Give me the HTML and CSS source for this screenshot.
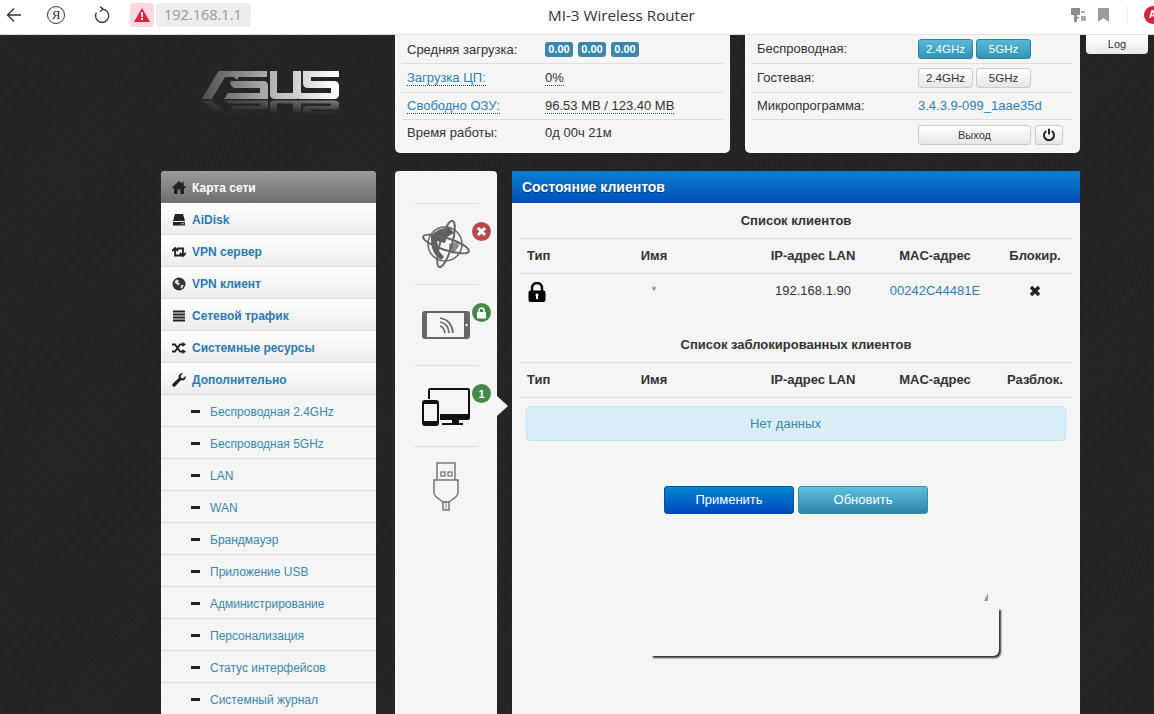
FILE: index.html
```html
<!DOCTYPE html>
<html lang="ru">
<head>
<meta charset="utf-8">
<title>MI-3 Wireless Router</title>
<link rel="stylesheet" href="styles.css">
</head>
<body>
<header class="bar">
  <div class="bar-left">
    <svg class="ico-back" width="16" height="16" viewBox="0 0 16 16"><path d="M15 8H1.500M8 1.500 1.500 8 8 14.500" fill="none" stroke="#333" stroke-width="1.300"/></svg>
    <span class="yandex">Я</span>
    <svg class="ico-reload" width="18" height="18" viewBox="0 0 18 18"><path d="M9.500 3.200A6.600 6.600 0 1 1 3.400 6.500" fill="none" stroke="#333" stroke-width="1.300"/><path d="M7 .5 10 3.200 7 5.600" fill="none" stroke="#333" stroke-width="1.300"/></svg>
    <span class="warn"><svg width="16" height="14" viewBox="0 0 16 14"><path d="M8 0 16 14H0Z" fill="#d9233f"/><path d="M7.100 4h1.800v5H7.100zM7.100 10h1.800v2H7.100z" fill="#fff"/></svg></span>
    <span class="addr">192.168.1.1</span>
  </div>
  <div class="bar-title">MI-3 Wireless Router</div>
  <div class="bar-right">
    <svg width="15" height="14" viewBox="0 0 15 14"><path d="M0 0h9v7H6v2h2v1.500H6V14H3V7H0Z" fill="#8d8d8d"/><path d="M10 3h4v2h-4zM10 8h5v5h-5z" fill="#a9a9a9"/></svg>
    <svg class="ico-mark" width="11" height="14" viewBox="0 0 11 14"><path d="M0 0h11v14L5.500 10 0 14Z" fill="#9c9c9c"/></svg>
    <span class="sep"></span>
    <span class="avatar">A</span>
  </div>
</header>

<div class="page">
  <div class="top">
    <div class="logo-col">
      <svg class="logo" width="140" height="46" viewBox="0 0 140 46">
        <defs>
          <linearGradient id="lg" x1="0" y1="0" x2="1" y2="0"><stop offset="0" stop-color="#4d4d4d"/><stop offset=".3" stop-color="#8c8c8c"/><stop offset=".6" stop-color="#c4c4c4"/><stop offset="1" stop-color="#fff"/></linearGradient>
          <linearGradient id="fade" x1="0" y1="30" x2="0" y2="44" gradientUnits="userSpaceOnUse"><stop offset="0" stop-color="#fff" stop-opacity=".42"/><stop offset="1" stop-color="#fff" stop-opacity="0"/></linearGradient>
          <mask id="fm" maskUnits="userSpaceOnUse" x="0" y="0" width="140" height="46"><rect x="0" y="30" width="140" height="16" fill="url(#fade)"/></mask>
          <path id="mark" d="M.7 29 17.300 1H66V7H37.500L36 10 33 7H24L10.700 29ZM30 11H62Q67 11 67 16V29H23L27 23H59V18H33Q28 15 30 11ZM69 1H76V23H92V1H100V24Q100 29 95 29H74Q69 29 69 24ZM102 1H138V7H110V11H133Q138 11 138 16V24Q138 29 133 29H98V23H130V18H107Q102 18 102 13Z"/>
        </defs>
        <use href="#mark" fill="url(#lg)"/>
        <g mask="url(#fm)"><use href="#mark" fill="url(#lg)" transform="translate(0 45) scale(1 -.5)"/></g>
      </svg>
    </div>
    <section class="panel">
      <div class="row row-a row-badges"><span class="lbl">Средняя загрузка:</span><span class="val"><b class="badge">0.00</b><b class="badge">0.00</b><b class="badge">0.00</b></span></div>
      <div class="row row-b"><span class="lbl"><a class="link dotted">Загрузка ЦП:</a></span><span class="val"><span class="dotted">0%</span></span></div>
      <div class="row row-c"><span class="lbl"><a class="link dotted">Свободно ОЗУ:</a></span><span class="val"><span class="dotted">96.53 MB / 123.40 MB</span></span></div>
      <div class="row row-last"><span class="lbl">Время работы:</span><span class="val">0д 00ч 21м</span></div>
    </section>
    <section class="panel panel-r">
      <div class="row row-a"><span class="lbl">Беспроводная:</span><span class="val2"><span class="mini on">2.4GHz</span><span class="mini on">5GHz</span></span></div>
      <div class="row row-b"><span class="lbl">Гостевая:</span><span class="val2"><span class="mini">2.4GHz</span><span class="mini">5GHz</span></span></div>
      <div class="row row-c"><span class="lbl">Микропрограмма:</span><span class="val2"><a class="link">3.4.3.9-099_1aae35d</a></span></div>
      <div class="row row-last row-exit"><span class="val2"><span class="exit">Выход</span><span class="power"><svg width="14" height="14" viewBox="0 0 14 14"><path d="M4.300 3A5 5 0 1 0 9.700 3M7 .8V6.500" fill="none" stroke="#222" stroke-width="2"/></svg></span></span></div>
    </section>
    <div class="log">Log</div>
  </div>

  <div class="main">
    <nav class="side">
      <a class="si si-active"><svg class="si-ic" width="14" height="13" viewBox="0 0 14 13"><path d="M7 0 0 6.500 1 7.500 2 6.700V13H5.500V8.500H8.500V13H12V6.700L13 7.500 14 6.500 11.500 4.200V1H9.800V2.600Z" fill="#222"/></svg>Карта сети</a>
      <a class="si"><svg class="si-ic" width="14" height="13" viewBox="0 0 14 13"><path d="M3 1H11L13 8H1ZM1 9H13V12.500H1Z" fill="#222"/><path d="M9 10.300h1.200v1H9zM11 10.300h1.200v1H11z" fill="#fff"/></svg>AiDisk</a>
      <a class="si"><svg class="si-ic" width="14" height="12" viewBox="0 0 14 12"><path d="M3 3.500V9.500H10M11 8.500V2.500H5M0 5 3 2 6 5M8 7 11 10 14 7" fill="none" stroke="#222" stroke-width="1.800"/></svg>VPN сервер</a>
      <a class="si"><svg class="si-ic" width="14" height="14" viewBox="0 0 14 14"><circle cx="7" cy="7" r="6.500" fill="#333"/><path d="M4 2.500 7 3.500 6 5.500 8 6.500 6.500 8.500 4.500 7 2.500 5.500ZM9 8 12 8 10 11.500 8.500 11Z" fill="#ddd"/></svg>VPN клиент</a>
      <a class="si"><svg class="si-ic" width="14" height="12" viewBox="0 0 14 12"><path d="M1 .5h12v2H1zM1 3.500h12v2H1zM1 6.500h12v2H1zM1 9.500h12v2H1z" fill="#222"/></svg>Сетевой трафик</a>
      <a class="si"><svg class="si-ic" width="14" height="12" viewBox="0 0 14 12"><path d="M0 2.500H3L8 9.500H11M0 9.500H3L8 2.500H11" fill="none" stroke="#222" stroke-width="1.800"/><path d="M10.500 0 14 2.500 10.500 5ZM10.500 7 14 9.500 10.500 12Z" fill="#222"/></svg>Системные ресурсы</a>
      <a class="si"><svg class="si-ic" width="14" height="14" viewBox="0 0 14 14"><path d="M13.500 3 11 5.300 9 4.800 8.600 2.800 11 .5C8.800-.2 6.500 1.200 6.500 3.600L6.700 5 .8 10.800C0 11.600 0 12.500.7 13.200S2.400 14 3.200 13.200L9 7.300 10.400 7.500C12.800 7.500 14.200 5.200 13.500 3Z" fill="#222"/></svg>Дополнительно</a>
      <a class="sub"><i class="dash"></i>Беспроводная 2.4GHz</a>
      <a class="sub"><i class="dash"></i>Беспроводная 5GHz</a>
      <a class="sub"><i class="dash"></i>LAN</a>
      <a class="sub"><i class="dash"></i>WAN</a>
      <a class="sub"><i class="dash"></i>Брандмауэр</a>
      <a class="sub"><i class="dash"></i>Приложение USB</a>
      <a class="sub"><i class="dash"></i>Администрирование</a>
      <a class="sub"><i class="dash"></i>Персонализация</a>
      <a class="sub"><i class="dash"></i>Статус интерфейсов</a>
      <a class="sub"><i class="dash"></i>Системный журнал</a>
    </nav>

    <aside class="net">
      <div class="cell">
        <svg width="52" height="50" viewBox="0 0 52 50">
          <circle cx="25" cy="25" r="17" fill="#f4f4f4" stroke="#666" stroke-width="1.500"/>
          <path d="M11 17Q18 8 30 9L34 14 27 18 25 24 17 22 19 32 24 38 21 41Q10 34 11 17Z" fill="#5f5f5f"/>
          <path d="M29 25 37 23 39 27 33 35 29 32Z" fill="#8a8a8a"/>
          <ellipse cx="26" cy="25" rx="24" ry="6" transform="rotate(18 26 25)" fill="none" stroke="#666" stroke-width="2"/>
          <ellipse cx="26" cy="25" rx="24" ry="6" transform="rotate(-74 26 25)" fill="none" stroke="#666" stroke-width="2"/>
        </svg>
        <span class="dot dot-red"><svg width="11" height="11" viewBox="0 0 11 11"><path d="M2 2 9 9M9 2 2 9" stroke="#fff" stroke-width="3"/></svg></span>
      </div>
      <div class="cell">
        <svg width="48" height="28" viewBox="0 0 48 28">
          <rect x="1" y="1" width="46" height="26" rx="2" fill="#f5f5f5" stroke="#666" stroke-width="2"/>
          <path d="M1 3V25Q1 27 3 27H5V1H3Q1 1 1 3ZM42 1H45Q47 1 47 3V25Q47 27 45 27H42Z" fill="#666"/>
          <circle cx="44.500" cy="14" r="1.200" fill="#f5f5f5"/>
          <path d="M18 7Q30 9 31 22M18 11Q26 12 27 22M18 15Q22 16 23 22" fill="none" stroke="#666" stroke-width="1.700"/>
        </svg>
        <span class="dot dot-green"><svg width="11" height="12" viewBox="0 0 11 12"><path d="M3 5V3.500A2.500 2.500 0 0 1 8 3.500V5" fill="none" stroke="#fff" stroke-width="1.500"/><rect x="1" y="5" width="9" height="6.500" rx="1" fill="#fff"/></svg></span>
      </div>
      <div class="cell cell-on">
        <svg class="devices" width="48" height="38" viewBox="0 0 48 38">
          <path d="M7 11V2Q7 1 8 1H46Q47 1 47 2V28Q47 30 45 30H19" fill="none" stroke="#111" stroke-width="2"/>
          <path d="M18 26H48V30Q48 32 46 32H18Z" fill="#111"/>
          <path d="M30 32H37V35H41V37H20V35H30Z" fill="#111"/>
          <rect x="1" y="13" width="15" height="24" rx="2" fill="#f5f5f5" stroke="#111" stroke-width="2"/>
          <path d="M1 14H16V16H1ZM1 33H16V36H1Z" fill="#111"/>
        </svg>
        <span class="dot dot-green">1</span>
        <span class="arrow"></span>
      </div>
      <div class="cell cell-usb">
        <svg width="26" height="50" viewBox="0 0 26 50">
          <path d="M4 18V1H22V18" fill="none" stroke="#777" stroke-width="1.500"/>
          <rect x="8" y="10" width="4" height="4" fill="none" stroke="#777" stroke-width="1.300"/>
          <rect x="15" y="10" width="4" height="4" fill="none" stroke="#777" stroke-width="1.300"/>
          <path d="M1 18H25V30Q25 34 20 37L16 40H10L6 37Q1 34 1 30Z" fill="#f5f5f5" stroke="#777" stroke-width="1.500"/>
          <path d="M10 40H16V48H10Z" fill="#f5f5f5" stroke="#777" stroke-width="1.500"/>
          <path d="M13 40V48" stroke="#888"/>
        </svg>
      </div>
    </aside>

    <section class="content">
      <h1 class="c-head">Состояние клиентов</h1>
      <h2 class="t-title">Список клиентов</h2>
      <table class="tbl">
        <colgroup><col class="c1"><col class="c2"><col class="c3"><col class="c4"><col class="c5"></colgroup>
        <thead><tr><th class="left">Тип</th><th>Имя</th><th>IP-адрес LAN</th><th>MAC-адрес</th><th>Блокир.</th></tr></thead>
        <tbody><tr>
          <td class="left"><svg class="lock" width="18" height="20" viewBox="0 0 18 20"><path d="M4 9V6A5 5 0 0 1 14 6V9" fill="none" stroke="#000" stroke-width="2.400"/><rect x="0.500" y="8.500" width="17" height="11.500" rx="2" fill="#000"/><path d="M9 11.500a1.500 1.500 0 0 1 1 2.600V17H8V14.100a1.500 1.500 0 0 1 1-2.600Z" fill="#fff"/></svg></td>
          <td class="star">*</td><td>192.168.1.90</td><td><a class="link">00242C44481E</a></td>
          <td><svg class="cross" width="12" height="12" viewBox="0 0 12 12"><path d="M2 2 10 10M10 2 2 10" stroke="#222" stroke-width="3.400"/></svg></td>
        </tr></tbody>
      </table>
      <h2 class="t-title t-title2">Список заблокированных клиентов</h2>
      <table class="tbl">
        <colgroup><col class="c1"><col class="c2"><col class="c3"><col class="c4"><col class="c5"></colgroup>
        <thead><tr><th class="left">Тип</th><th>Имя</th><th>IP-адрес LAN</th><th>MAC-адрес</th><th>Разблок.</th></tr></thead>
      </table>
      <div class="alert">Нет данных</div>
      <div class="actions"><span class="btn btn-blue">Применить</span><span class="btn btn-info">Обновить</span></div>
      <div class="tip"></div>
      <span class="tip-tick"></span>
    </section>
  </div>
</div>
</body>
</html>
```
FILE: styles.css
```css
* { box-sizing: border-box; }
html, body { margin: 0; height: 100%; overflow: hidden; }
body { font: 13px/18px "Liberation Sans", Arial, sans-serif; color: #333; background: #fff; }

.bar { display: flex; align-items: center; height: 35px; background: #fff; border-bottom: 1px solid #e2e2e2; padding-bottom: 5px; position: relative; z-index: 2; }
.bar-left { flex: 0 0 548px; display: flex; align-items: center; padding-left: 6px; }
.ico-back { flex: none; }
.yandex { flex: none; width: 18px; height: 18px; margin-left: 25px; border: 1.300px solid #333; border-radius: 50%; font: 13px/16px "Liberation Serif", serif; text-align: center; color: #333; }
.ico-reload { flex: none; margin-left: 28px; }
.warn { flex: none; display: flex; align-items: center; justify-content: center; width: 24px; height: 24px; margin-left: 19px; background: #f9d9dd; border-radius: 4px; }
.addr { flex: none; width: 95px; height: 24px; margin-left: 2px; padding-left: 8px; background: #ededed; border-radius: 4px; color: #999; font: 14.500px/24px "Open Sans", sans-serif; }
.bar-title { flex: none; font: 15.200px/20px "Open Sans", sans-serif; color: #333; white-space: nowrap; }
.bar-right { margin-left: auto; display: flex; align-items: center; margin-right: -8px; }
.ico-mark { margin-left: 12px; }
.sep { width: 1px; height: 16px; background: #eee; margin-left: 18px; }
.avatar { width: 18px; height: 18px; margin-left: 16px; border-radius: 50%; background: #d8213d; color: #fff; font: bold 10px/18px "Liberation Sans", sans-serif; padding-left: 5px; }

.page { height: calc(100vh - 35px); padding-left: 161px; overflow: hidden; background:
  repeating-linear-gradient(45deg, rgba(255,255,255,.018) 0 1px, transparent 1px 2px),
  repeating-linear-gradient(-45deg, rgba(0,0,0,.1) 0 1px, transparent 1px 3px),
  #242424; }

.top { display: flex; align-items: flex-start; height: 118px; }
.logo-col { flex: 0 0 215px; padding: 35px 0 0 40px; }
.logo { display: block; }
.panel { flex: 0 0 335px; height: 118px; margin-left: 19px; padding: 0 7px; background: #f5f5f5; border-radius: 0 0 5px 5px; }
.panel-r { margin-left: 15px; }
.row { display: flex; align-items: center; padding-left: 5px; border-bottom: 1px solid #ddd; }
.row-a { height: 29px; }
.row-badges { padding-top: 1px; }
.row-b { height: 29px; }
.row-c { height: 27px; }
.row-last { border-bottom: 0; height: 26px; }
.row-exit { height: 33px; padding-bottom: 3px; }
.lbl { flex: 0 0 138px; }
.panel-r .lbl { flex-basis: 161px; }
.val { display: flex; }
.val2 { display: flex; gap: 3px; }
.row-exit .val2 { margin-left: 161px; }
.link { color: #2f7fb5; }
.dotted { display: inline-block; border-bottom: 1px dotted #1a4a6c; line-height: 14px; }
.badge { display: block; width: 28px; height: 15px; margin-right: 5px; background: #3a87ad; border-radius: 3px; color: #fff; font: bold 11px/15px "Liberation Sans", sans-serif; text-align: center; }
.mini { display: block; width: 55px; height: 20px; border: 1px solid #ccc; border-radius: 3px; background: linear-gradient(#fff, #e6e6e6); font-size: 11.500px; line-height: 18px; text-align: center; color: #333; }
.mini.on { background: linear-gradient(#5bb7d6, #2f96b4); border-color: #2a85a0; color: #fff; }
.exit { display: block; width: 113px; height: 20px; border: 1px solid #ccc; border-radius: 3px; background: linear-gradient(#fff, #e6e6e6); font-size: 11px; line-height: 18px; text-align: center; }
.power { display: flex; align-items: center; justify-content: center; width: 28px; height: 20px; margin-left: 1px; border: 1px solid #ccc; border-radius: 3px; background: linear-gradient(#fff, #e6e6e6); }
.log { flex: 0 0 62px; height: 19px; margin-left: 6px; background: linear-gradient(#fff, #eaeaea); border-radius: 0 0 4px 4px; font-size: 11px; line-height: 18px; text-align: center; }

.main { display: flex; align-items: flex-start; margin-top: 18px; }
.side { flex: 0 0 215px; border-radius: 4px 4px 0 0; overflow: hidden; background: #f5f5f5; }
.si { display: flex; align-items: center; height: 32px; padding: 2px 0 0 11px; border-bottom: 1px solid #ddd; background: linear-gradient(#fff, #ececec); color: #2b7ab0; font-size: 12px; font-weight: bold; }
.si-ic { flex: none; margin-right: 6px; }
.si-active { background: linear-gradient(#9a9a9a, #6d6f72); color: #fff; border-bottom: 1px solid #777; }
.sub { display: flex; align-items: center; height: 32px; padding: 2px 0 0 30px; border-bottom: 1px solid #ddd; color: #3a87ad; font-size: 12px; }
.dash { flex: none; width: 9px; height: 3px; margin-right: 10px; background: #222; }

.net { flex: 0 0 102px; height: 560px; margin-left: 19px; padding-top: 32px; background: #f5f5f5; border-radius: 4px 4px 0 0; }
.cell { position: relative; display: flex; align-items: center; justify-content: center; height: 81px; margin: 0 19px; border-top: 1px solid #ddd; }
.devices { margin-top: 2px; }
.dot { position: absolute; left: 58px; top: 18px; display: flex; align-items: center; justify-content: center; width: 19px; height: 19px; border-radius: 50%; color: #fff; font-size: 11px; font-weight: bold; }
.dot-red { background: #b94a48; }
.dot-green { background: #468847; }
.arrow { position: absolute; left: 83px; top: 30px; width: 0; height: 0; border-top: 10px solid transparent; border-bottom: 10px solid transparent; border-left: 11px solid #f5f5f5; }

.content { position: relative; flex: 0 0 568px; height: 560px; margin-left: 15px; background: #f5f5f5; }
.c-head { margin: 0; height: 32px; padding-left: 10px; background: linear-gradient(#0a80cf, #0050b8); color: #fff; font-size: 14px; font-weight: bold; line-height: 32px; text-shadow: 0 1px 1px #036; }
.t-title { margin: 0; height: 35px; font-size: 13px; font-weight: bold; line-height: 35px; text-align: center; color: #333; }
.t-title2 { height: 36px; line-height: 38px; }
.tbl { table-layout: fixed; width: 554px; margin-left: 7px; border-collapse: collapse; }
.c1 { width: 36px; } .c2 { width: 198px; } .c3 { width: 120px; } .c4 { width: 124px; } .c5 { width: 76px; }
.tbl th { height: 35px; padding: 0; border-top: 1px solid #ddd; border-bottom: 1px solid #ddd; font-weight: bold; text-align: center; white-space: nowrap; }
.tbl td { height: 52px; padding: 8px 0 0; vertical-align: top; text-align: center; white-space: nowrap; }
.tbl .star { color: #777; }
.tbl .left { padding-left: 8px; text-align: left; }
.lock, .cross { display: block; }
.lock { margin-left: 1px; }
.cross { margin: 3px auto 0; }
.alert { height: 35px; margin: 8px 14px 0; padding: 0 35px 0 14px; background: #d9edf7; border: 1px solid #bce8f1; border-radius: 4px; color: #3a87ad; line-height: 33px; text-align: center; }
.actions { display: flex; justify-content: center; gap: 4px; margin-top: 45px; }
.btn { display: block; width: 130px; height: 28px; border-radius: 3px; color: #fff; line-height: 25px; text-align: center; }
.btn-blue { background: linear-gradient(#0088cc, #0048c0); border: 1px solid #0050a8; }
.btn-info { background: linear-gradient(#5bc0de, #2f86a8); border: 1px solid #3a8ea8; }
.tip { position: absolute; left: 139px; top: 437px; width: 348px; height: 48px; background: #f5f5f5; border-radius: 0 0 6px 0; box-shadow: 2px 2px 2px #333; clip-path: inset(0 -6px -6px 0); }
.tip-tick { position: absolute; left: 472px; top: 422px; width: 4px; height: 8px; background: #999; clip-path: polygon(100% 0, 100% 100%, 0 100%); }
```
